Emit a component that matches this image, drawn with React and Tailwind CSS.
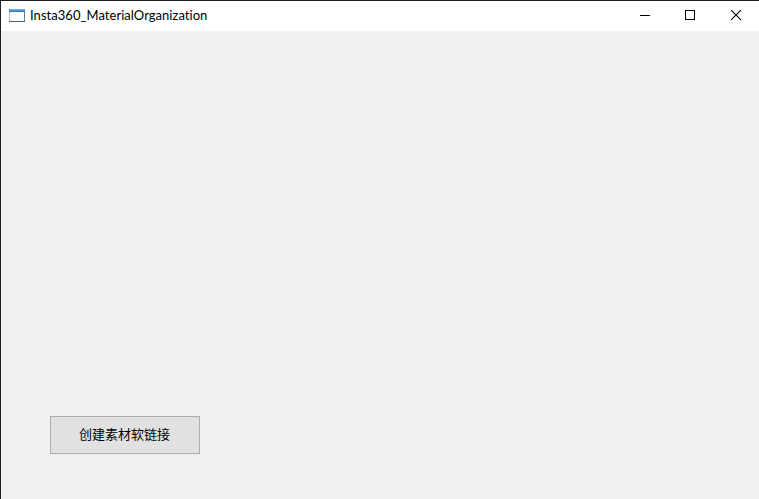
function AppIcon() {
  return (
    <svg width="16" height="14" viewBox="0 0 16 14" shapeRendering="crispEdges" aria-hidden="true">
      <rect width="16" height="13" fill="#a9bccd" />
      <rect width="16" height="1" fill="#76aede" />
      <rect y="1" width="16" height="1" fill="#4f94d2" />
      <rect y="2" width="16" height="1" fill="#3478b5" />
      <rect x="1" y="3" width="14" height="9" fill="#fafcfd" />
      <rect x="15" y="3" width="1" height="9" fill="#6b7f93" />
      <rect y="12" width="16" height="1" fill="#4b6075" />
    </svg>
  );
}

function WindowControls() {
  return (
    <div className="ml-auto flex h-full">
      <button aria-label="Minimize" className="flex w-[46px] items-start justify-center pt-[9px]">
        <svg width="10" height="10" shapeRendering="crispEdges"><rect y="5" width="10" height="1" /></svg>
      </button>
      <button aria-label="Maximize" className="flex w-[44px] items-start justify-center pt-[9px]">
        <svg width="10" height="10" shapeRendering="crispEdges"><path fillRule="evenodd" d="M0 0H10V10H0ZM1 1V9H9V1Z" /></svg>
      </button>
      <button aria-label="Close" className="flex w-[47px] items-start justify-center pt-[9px] pl-px">
        <svg width="10" height="10"><path d="M0 0L10 10M10 0L0 10" fill="none" stroke="#000" strokeWidth="1.1" /></svg>
      </button>
    </div>
  );
}

export default function App() {
  return (
    <div className="flex h-[499px] w-[759px] flex-col border-t border-l border-[#201c1f] bg-[#f0f0f0] font-['Lato','Noto_Sans_CJK_SC',sans-serif] text-black">
      <header className="flex h-[30px] shrink-0 items-center bg-white pl-2">
        <AppIcon />
        <h1 className="ml-[5px] pb-0.5 text-[13px] leading-4 tracking-[0.04px] whitespace-nowrap">Insta360_MaterialOrganization</h1>
        <WindowControls />
      </header>
      <main className="flex flex-1 items-end pb-[45px] pl-[49px]">
        <button className="flex h-[38px] w-[150px] items-center justify-center border border-[#adadad] bg-[#e1e1e1] pr-px pb-0.5 font-['Noto_Sans_CJK_SC',sans-serif] text-[13px] leading-4">创建素材软链接</button>
      </main>
    </div>
  );
}
